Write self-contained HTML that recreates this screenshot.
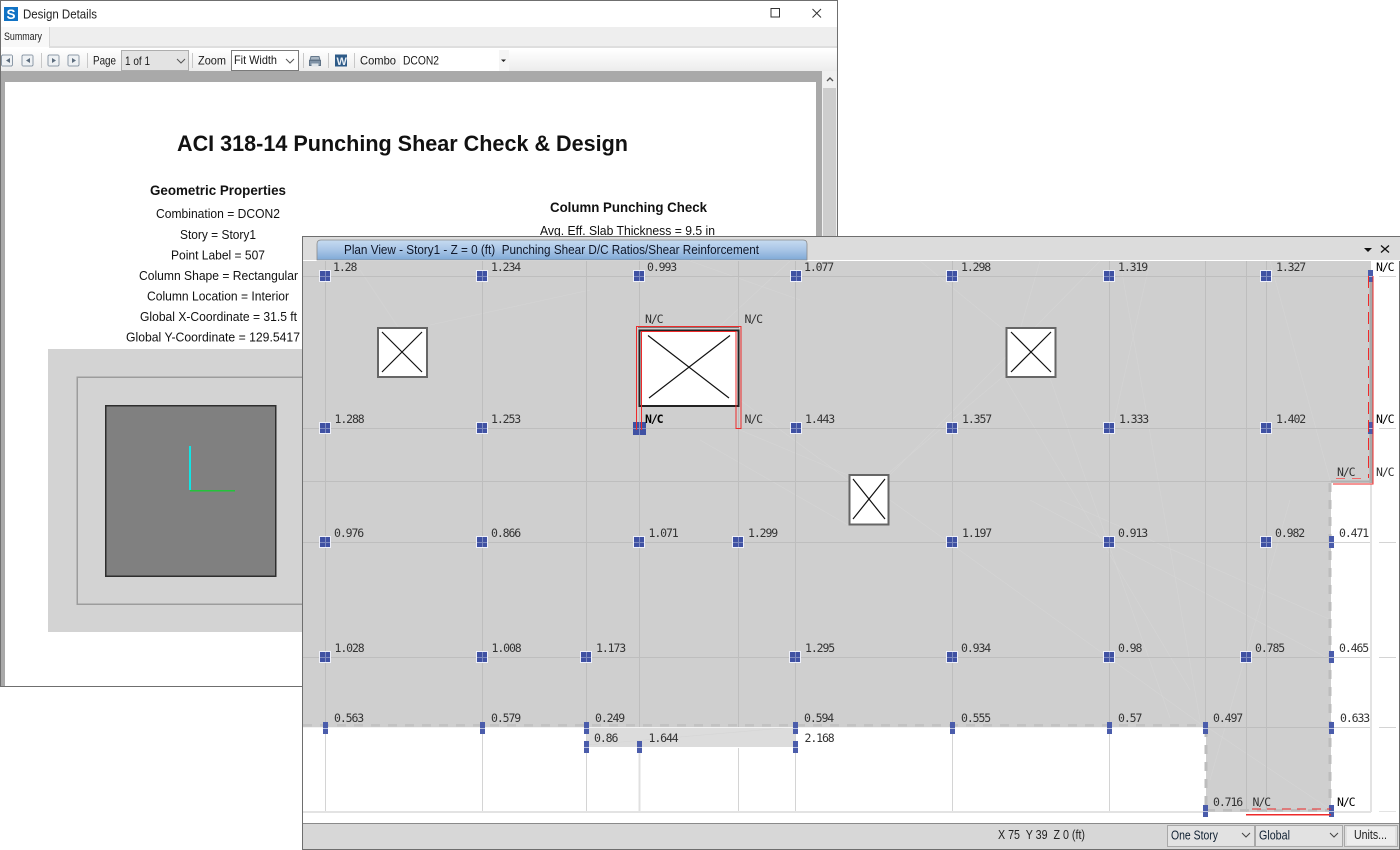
<!DOCTYPE html>
<html><head><meta charset="utf-8"><title>Design Details</title>
<style>
html,body{margin:0;padding:0;background:#fff;width:1400px;height:850px;overflow:hidden}
svg{display:block;position:absolute;left:0;top:0}
text{font-family:"Liberation Sans",sans-serif;fill:#111}
.m{font-family:"DejaVu Sans Mono","Liberation Mono",monospace;font-size:11.5px;letter-spacing:-1.1px;fill:#333}
.u{font-size:12px;fill:#1a1a1a}
.r{font-size:12.5px;text-anchor:start;fill:#111}
.g{stroke:#bebebe;stroke-width:1;fill:none}
.w{stroke:#d4d4d4;stroke-width:1;fill:none}
</style></head><body>
<svg width="1400" height="850" viewBox="0 0 1400 850" xmlns="http://www.w3.org/2000/svg" shape-rendering="crispEdges">
<defs>
<g id="n"><rect x="-6" y="-6" width="12" height="12" fill="#eef0fa"/><rect x="-5" y="-5" width="10" height="10" fill="#3f51a3"/><path d="M-5 0.5H5M0.5-5V5" stroke="#7c89c0" stroke-width="1"/></g>
<g id="h"><rect x="-2" y="-6" width="5" height="12" fill="#4a5cab"/><path d="M-2 0.5H3" stroke="#b8c0e0"/></g>
<linearGradient id="tb" x1="0" y1="0" x2="0" y2="1"><stop offset="0" stop-color="#ffffff"/><stop offset="1" stop-color="#ececec"/></linearGradient>
<linearGradient id="tab" x1="0" y1="0" x2="0" y2="1"><stop offset="0" stop-color="#c6dbf1"/><stop offset=".5" stop-color="#a8c5e6"/><stop offset="1" stop-color="#7fa9d6"/></linearGradient>
<g id="ic"><rect x="-5.5" y="-5.5" width="11" height="11" rx="1.5" fill="#eef1f4" stroke="#8d9aa8"/></g>
</defs>

<!-- Back window -->
<rect x="0.5" y="0.5" width="837" height="686" fill="#fff" stroke="#6f6f6f"/>
<rect x="1" y="27" width="836" height="19" fill="#eeeeee"/>
<rect x="1" y="27" width="48" height="20" fill="#f8f8f8"/>
<path d="M49.5 27V46" stroke="#d8d8d8"/>
<rect x="49" y="46" width="788" height="2" fill="#dedede"/>
<rect x="1" y="49" width="836" height="22" fill="url(#tb)"/>
<rect x="1" y="71" width="821" height="615" fill="#a9a9a9"/>
<rect x="5" y="82" width="811" height="604" fill="#fff"/>
<rect x="822" y="71" width="15" height="615" fill="#f0f0f0"/>
<rect x="823" y="88" width="13" height="598" fill="#cdcdcd"/>
<path d="M827 81L830 78L833 81" fill="none" stroke="#555" stroke-width="1.4" shape-rendering="auto"/>

<rect x="4" y="7" width="14" height="14" fill="#1173c5"/>
<text x="6.5" y="19" font-size="13.5" font-weight="bold" style="fill:#fff">S</text>
<text x="23" y="18.5" font-size="12.5" textLength="74" lengthAdjust="spacingAndGlyphs" style="fill:#222">Design Details</text>
<rect x="771" y="8.5" width="8.5" height="8.5" fill="none" stroke="#333" stroke-width="1.2"/>
<path d="M812.5 9L821 17.5M821 9L812.5 17.5" stroke="#333" stroke-width="1" shape-rendering="auto"/>
<text x="4" y="40" font-size="11" textLength="38" lengthAdjust="spacingAndGlyphs" style="fill:#222">Summary</text>

<use href="#ic" x="7" y="60.5"/><path d="M10 58V63L6 60.5Z" fill="#5d6d7e" shape-rendering="auto"/>
<use href="#ic" x="27.5" y="60.5"/><path d="M30 58V63L26 60.5Z" fill="#5d6d7e" shape-rendering="auto"/>
<use href="#ic" x="53.5" y="60.5"/><path d="M52 58V63L56 60.5Z" fill="#5d6d7e" shape-rendering="auto"/>
<use href="#ic" x="73.5" y="60.5"/><path d="M72 58V63L76 60.5Z" fill="#5d6d7e" shape-rendering="auto"/>
<path d="M41.5 53V68M87.5 53V68M192.5 53V68M303.5 53V68M328.5 53V68M354.5 53V68" stroke="#c8c8c8"/>
<text x="93" y="64.5" class="u" textLength="23" lengthAdjust="spacingAndGlyphs">Page</text>
<rect x="121.5" y="50.5" width="67" height="20" fill="#e3e3e3" stroke="#adadad"/>
<text x="125" y="65" class="u" textLength="25" lengthAdjust="spacingAndGlyphs">1 of 1</text>
<path d="M177 59L181 63L185 59" fill="none" stroke="#555" shape-rendering="auto"/>
<text x="198" y="64.5" class="u" textLength="28" lengthAdjust="spacingAndGlyphs">Zoom</text>
<rect x="231.5" y="50.5" width="67" height="20" fill="#fff" stroke="#7a7a7a"/>
<text x="234" y="64" class="u" textLength="43" lengthAdjust="spacingAndGlyphs">Fit Width</text>
<path d="M286 59L290 63L294 59" fill="none" stroke="#555" shape-rendering="auto"/>
<path d="M311 56.5H319L320 60H310Z" fill="#a9b6c3" stroke="#66798c" shape-rendering="auto"/>
<rect x="309.5" y="60.5" width="11" height="5" fill="#7f92a6" stroke="#5f7286"/>
<rect x="311.5" y="63.5" width="7" height="3" fill="#dfe5ea"/>
<rect x="335" y="54.5" width="12" height="12" fill="#2d5a87"/>
<text x="336.5" y="65" font-size="11" font-weight="bold" style="fill:#e8eef5">W</text>
<text x="360" y="64.5" class="u" textLength="36" lengthAdjust="spacingAndGlyphs">Combo</text>
<rect x="400" y="50" width="109" height="21" fill="#fff"/>
<rect x="499" y="50" width="10" height="21" fill="#f5f5f5"/>
<text x="403" y="64.5" class="u" textLength="36" lengthAdjust="spacingAndGlyphs">DCON2</text>
<path d="M501 59.5H506L503.5 62Z" fill="#222" shape-rendering="auto"/>

<!-- Report -->
<text x="177" y="151" font-size="22" font-weight="bold" textLength="451" lengthAdjust="spacingAndGlyphs">ACI 318-14 Punching Shear Check &amp; Design</text>
<text x="150" y="195" font-size="14" font-weight="bold" textLength="136" lengthAdjust="spacingAndGlyphs">Geometric Properties</text>
<text x="156" y="218" class="r" textLength="124" lengthAdjust="spacingAndGlyphs">Combination = DCON2</text>
<text x="180" y="239" class="r" textLength="76" lengthAdjust="spacingAndGlyphs">Story = Story1</text>
<text x="171" y="259.5" class="r" textLength="94" lengthAdjust="spacingAndGlyphs">Point Label = 507</text>
<text x="139" y="280" class="r" textLength="159" lengthAdjust="spacingAndGlyphs">Column Shape = Rectangular</text>
<text x="147" y="300.5" class="r" textLength="142" lengthAdjust="spacingAndGlyphs">Column Location = Interior</text>
<text x="140" y="321" class="r" textLength="157" lengthAdjust="spacingAndGlyphs">Global X-Coordinate = 31.5 ft</text>
<text x="126" y="341.5" class="r" textLength="174" lengthAdjust="spacingAndGlyphs">Global Y-Coordinate = 129.5417</text>
<text x="550" y="212" font-size="14" font-weight="bold" textLength="157" lengthAdjust="spacingAndGlyphs">Column Punching Check</text>
<text x="540" y="235" class="r" textLength="175" lengthAdjust="spacingAndGlyphs">Avg. Eff. Slab Thickness = 9.5 in</text>
<rect x="48" y="349" width="270" height="283" fill="#d3d3d3"/>
<rect x="77" y="377" width="240" height="227" fill="none" stroke="#9c9c9c" stroke-width="1.5"/>
<rect x="105.5" y="405.5" width="170" height="170.5" fill="#808080" stroke="#2e2e2e" stroke-width="1.5"/>
<path d="M190 490V446" stroke="#12e4e4" stroke-width="2"/>
<path d="M190 490.5H235" stroke="#22c43a" stroke-width="1.5"/>

<!-- Plan window -->
<rect x="302.5" y="236.5" width="1097" height="613" fill="#fff" stroke="#6e6e6e"/>
<rect x="303" y="237" width="1097" height="23" fill="#dcdcdc"/>
<rect x="303" y="260" width="1097" height="1" fill="#fff"/>
<path d="M317 260V244Q317 240 321 240H803Q807 240 807 244V260Z" fill="url(#tab)" stroke="#8a8a8a" stroke-width=".8" shape-rendering="auto"/>
<text x="344" y="254" font-size="12.5" textLength="415" lengthAdjust="spacingAndGlyphs" style="fill:#10182a" xml:space="preserve">Plan View - Story1 - Z = 0 (ft)  Punching Shear D/C Ratios/Shear Reinforcement</text>
<path d="M1364 248H1372L1368 252Z" fill="#111" shape-rendering="auto"/>
<path d="M1381 245.5L1389 252.5M1389 245.5L1381 252.5" stroke="#111" stroke-width="1.3" shape-rendering="auto"/>

<!-- Slab -->
<path d="M303 261H1371V483H1331V812H1206V727H303Z" fill="#cfcfcf"/>
<rect x="586" y="727" width="209" height="20" fill="#dcdcdc"/>
<g shape-rendering="auto" stroke="#d5d5d5" stroke-width=".6" fill="none">
<path d="M360 270L400 330M430 325L590 290M690 261L800 300M790 261L640 400M1004 330L920 261M1040 261L1020 330M740 430L850 476M885 476L1005 375M885 480L1100 261M848 525L700 440M890 500L1205 727M1050 378L1170 718M1005 378L1190 690M1120 261L1200 720M1270 261L1330 480M1290 500L1210 780M740 400L848 480M1150 261L1110 440M1207 727L1331 810M587 745L795 727M1030 500L1331 660M1060 500L1331 620"/>
</g>
<g class="g">
<path d="M303 276.5H1371M303 428.5H1371M303 481.5H1331M303 542.5H1331M303 657.5H1331"/>
<path d="M325.5 261V727M482.5 261V727M586.5 261V727M639.5 261V727M738.5 261V727M795.5 261V727M952.5 261V727M1109.5 261V727M1205.5 261V727M1246.5 261V812M1266.5 261V812"/>
<path d="M1206 727.5H1331"/>
</g>
<rect x="303" y="727" width="903" height="1" fill="#f2f2f2"/>
<g class="w">
<path d="M325.5 728V812M482.5 728V812M586.5 728V812M738.5 748V812M795.5 728V812M952.5 728V812M1109.5 728V812"/>
<path d="M639.5 747V812" stroke="#e0e0e0" stroke-width="2"/>
<path d="M1331 542.5H1371M1379 542.5H1396M1331 657.5H1371M1379 657.5H1396M1331 727.5H1371M1379 727.5H1396M1379 276.5H1396M1379 428.5H1396"/>
</g>
<rect x="303" y="811" width="903" height="2" fill="#e3e3e3"/>
<rect x="1331" y="811" width="40" height="2" fill="#e3e3e3"/>
<path d="M1379 811.5H1396" stroke="#e3e3e3"/>
<rect x="1370" y="484" width="2" height="328" fill="#e3e3e3"/>

<!-- dashed edges -->
<path d="M303 725H1205" stroke="#c2c2c2" stroke-width="2.5" stroke-dasharray="9 8" fill="none"/>
<path d="M1206 728V812" stroke="#bdbdbd" stroke-width="3" stroke-dasharray="9 8" fill="none"/>
<path d="M1330 483V812" stroke="#bdbdbd" stroke-width="3" stroke-dasharray="9 8" fill="none"/>
<path d="M1206 810H1331" stroke="#bdbdbd" stroke-width="2.5" stroke-dasharray="9 8" fill="none"/>
<path d="M1371 276V483" stroke="#a8a8a8" stroke-width="3"/>
<path d="M1331 481.5H1371" stroke="#b0b0b0" stroke-width="2"/>

<!-- Openings -->
<g shape-rendering="auto">
<rect x="378" y="328" width="49" height="49" fill="#fff" stroke="#666" stroke-width="2"/>
<path d="M382 332L422 372M422 332L382 372" stroke="#111" stroke-width="1.2"/>
<rect x="1006.5" y="328" width="49" height="49" fill="#fff" stroke="#666" stroke-width="2"/>
<path d="M1011 332L1051 372M1051 332L1011 372" stroke="#111" stroke-width="1.2"/>
<rect x="849.5" y="475" width="39" height="49.5" fill="#fff" stroke="#666" stroke-width="2"/>
<path d="M853 479L885 519M885 479L853 519" stroke="#111" stroke-width="1.2"/>
<rect x="639.5" y="330.5" width="99" height="75.5" fill="#fff" stroke="#222" stroke-width="2"/>
<path d="M648 335.5L729 398M730 335.5L649 398" stroke="#111" stroke-width="1.2"/>
</g>

<!-- Nodes -->
<g>
<use href="#n" x="325" y="276"/><use href="#n" x="482" y="276"/><use href="#n" x="639" y="276"/><use href="#n" x="796" y="276"/><use href="#n" x="952" y="276"/><use href="#n" x="1109" y="276"/><use href="#n" x="1266" y="276"/>
<use href="#n" x="325" y="428"/><use href="#n" x="482" y="428"/><use href="#n" x="796" y="428"/><use href="#n" x="952" y="428"/><use href="#n" x="1109" y="428"/><use href="#n" x="1266" y="428"/>
<use href="#n" x="325" y="542"/><use href="#n" x="482" y="542"/><use href="#n" x="639" y="542"/><use href="#n" x="738" y="542"/><use href="#n" x="952" y="542"/><use href="#n" x="1109" y="542"/><use href="#n" x="1266" y="542"/>
<use href="#n" x="325" y="657"/><use href="#n" x="482" y="657"/><use href="#n" x="586" y="657"/><use href="#n" x="795" y="657"/><use href="#n" x="952" y="657"/><use href="#n" x="1109" y="657"/><use href="#n" x="1246" y="657"/>
<rect x="633" y="422" width="13" height="13" fill="#3f51a3"/><path d="M633 428.5H646M639.5 422V435" stroke="#7f8bc0"/>
<use href="#h" x="1370" y="276"/><use href="#h" x="1370" y="428"/>
<use href="#h" x="1331" y="542"/><use href="#h" x="1331" y="657"/>
<use href="#h" x="325" y="728"/><use href="#h" x="482" y="728"/><use href="#h" x="586" y="728"/><use href="#h" x="795" y="728"/><use href="#h" x="952" y="728"/><use href="#h" x="1109" y="728"/><use href="#h" x="1205" y="728"/><use href="#h" x="1331" y="728"/>
<use href="#h" x="586" y="747"/><use href="#h" x="639" y="747"/><use href="#h" x="795" y="747"/>
<use href="#h" x="1205" y="811"/><use href="#h" x="1331" y="811"/>
</g>

<!-- Red reinforcement outlines -->
<g fill="none" stroke="#ee2a2a" stroke-width="1.2">
<path d="M636.5 430V326.5H741V428.5H736V331.5H641.5V430"/>
<path d="M1368.5 276V478" stroke-dasharray="12 6"/>
<path d="M1373 276V484H1333"/>
<path d="M1336 478.5H1368" stroke-dasharray="9 7" stroke="#ef6a6a"/>
<path d="M1252 809H1331" stroke-dasharray="9 6"/>
<path d="M1246 814.5H1331" stroke-width="1.5"/>
</g>
<path d="M638 327.5H739" stroke="#777"/>

<!-- Labels -->
<g>
<text class="m" x="333" y="271">1.28</text><text class="m" x="491" y="271">1.234</text><text class="m" x="647" y="271">0.993</text><text class="m" x="804" y="271">1.077</text><text class="m" x="961" y="271">1.298</text><text class="m" x="1118" y="271">1.319</text><text class="m" x="1276" y="271">1.327</text><text class="m" x="1376" y="271" style="fill:#000">N/C</text>
<text class="m" x="645" y="323">N/C</text><text class="m" x="744.5" y="323">N/C</text>
<text class="m" x="334.5" y="423">1.288</text><text class="m" x="491" y="423">1.253</text><text class="m" x="645" y="423" style="fill:#000;font-weight:bold">N/C</text><text class="m" x="744.5" y="423">N/C</text><text class="m" x="805" y="423">1.443</text><text class="m" x="962" y="423">1.357</text><text class="m" x="1119" y="423">1.333</text><text class="m" x="1276" y="423">1.402</text><text class="m" x="1376" y="423" style="fill:#000">N/C</text>
<text class="m" x="1337" y="476">N/C</text><text class="m" x="1376" y="476">N/C</text>
<text class="m" x="334" y="537">0.976</text><text class="m" x="491" y="537">0.866</text><text class="m" x="648.5" y="537">1.071</text><text class="m" x="748" y="537">1.299</text><text class="m" x="962" y="537">1.197</text><text class="m" x="1118" y="537">0.913</text><text class="m" x="1275" y="537">0.982</text><text class="m" x="1339" y="537">0.471</text>
<text class="m" x="334.5" y="652">1.028</text><text class="m" x="491.5" y="652">1.008</text><text class="m" x="596" y="652">1.173</text><text class="m" x="805" y="652">1.295</text><text class="m" x="961" y="652">0.934</text><text class="m" x="1118" y="652">0.98</text><text class="m" x="1255" y="652">0.785</text><text class="m" x="1339" y="652">0.465</text>
<text class="m" x="334" y="722">0.563</text><text class="m" x="491" y="722">0.579</text><text class="m" x="595" y="722">0.249</text><text class="m" x="804" y="722">0.594</text><text class="m" x="961" y="722">0.555</text><text class="m" x="1118" y="722">0.57</text><text class="m" x="1213" y="722">0.497</text><text class="m" x="1340" y="722">0.633</text>
<text class="m" x="594" y="742">0.86</text><text class="m" x="648.5" y="742">1.644</text><text class="m" x="804.5" y="742">2.168</text>
<text class="m" x="1213" y="806">0.716</text><text class="m" x="1252.5" y="806">N/C</text><text class="m" x="1337" y="806" style="fill:#000">N/C</text>
</g>

<!-- Status bar -->
<rect x="303" y="823" width="1096" height="26" fill="#d7d7d7"/>
<path d="M303 823.5H1399" stroke="#8a8a8a"/>
<path d="M302.5 236.5V849.5H1399.5" fill="none" stroke="#6e6e6e"/>
<text x="998" y="839" font-size="12.5" textLength="87" lengthAdjust="spacingAndGlyphs" style="fill:#222" xml:space="preserve">X 75  Y 39  Z 0 (ft)</text>
<rect x="1167.5" y="825.5" width="87" height="21" fill="#e2e2e2" stroke="#a8a8a8"/>
<text x="1171" y="839.5" font-size="12.5" textLength="47" lengthAdjust="spacingAndGlyphs" style="fill:#123">One Story</text>
<path d="M1242 833L1246 837L1250 833" fill="none" stroke="#444" shape-rendering="auto"/>
<rect x="1255.5" y="825.5" width="87" height="21" fill="#e2e2e2" stroke="#a8a8a8"/>
<text x="1259" y="839.5" font-size="12.5" textLength="31" lengthAdjust="spacingAndGlyphs" style="fill:#123">Global</text>
<path d="M1330 833L1334 837L1338 833" fill="none" stroke="#444" shape-rendering="auto"/>
<rect x="1344.5" y="825.5" width="53" height="21" fill="#e0e0e0" stroke="#a8a8a8"/>
<rect x="1347" y="827" width="48" height="18" fill="#ededed"/>
<text x="1354" y="839" font-size="12.5" textLength="33" lengthAdjust="spacingAndGlyphs" style="fill:#222">Units...</text>
</svg>
</body></html>
